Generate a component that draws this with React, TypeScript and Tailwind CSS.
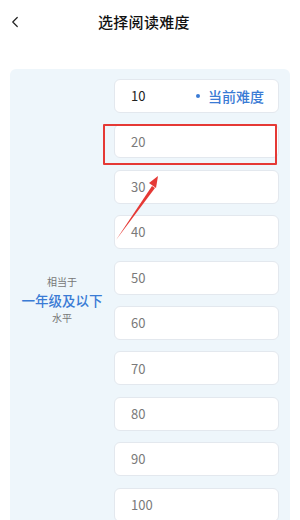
import { ChevronLeft } from "lucide-react";

const levels = [10, 20, 30, 40, 50, 60, 70, 80, 90, 100];

export default function App() {
  return (
    <div
      className="relative w-[300px] h-[520px] overflow-hidden bg-white"
      style={{ fontFamily: '"Noto Sans CJK SC", "Noto Sans", sans-serif' }}
    >
      {/* header */}
      <div className="flex items-center h-[44px] pl-[6px]">
        <ChevronLeft size={18} strokeWidth={1.6} className="text-[#222]" />
        <h1 className="ml-[74px] text-[15px] font-medium text-[#111] tracking-[0.3px]">选择阅读难度</h1>
      </div>

      {/* panel */}
      <div className="mt-[25px] mx-[10px] rounded-[6px] bg-[#eef6fb] flex pt-[10px] pr-[11px] pb-[12px]">
        <div className="w-[104px] flex flex-col items-center justify-center">
          <span className="text-[10px] leading-[16px] text-[#777]">相当于</span>
          <span className="text-[13.5px] leading-[20px] font-medium text-[#3a7bd5]">一年级及以下</span>
          <span className="text-[10px] leading-[16px] text-[#777]">水平</span>
        </div>
        <div className="flex-1 flex flex-col gap-[11.4px]">
          {levels.map((lv, i) => (
            <div
              key={lv}
              className="h-[34px] rounded-[6px] bg-white border border-[#e3e8ee] flex items-center pl-[16px] pr-[14px]"
            >
              <span className={`text-[13px] ${i === 0 ? "text-[#222]" : "text-[#7a7a7a]"}`}>{lv}</span>
              {i === 0 && (
                <span className="ml-auto flex items-center text-[14px] font-medium text-[#3a7bd5]">
                  <span className="w-[4px] h-[4px] rounded-full bg-[#3a7bd5] mr-[8px]" />
                  当前难度
                </span>
              )}
            </div>
          ))}
        </div>
      </div>

      {/* annotation: highlight box */}
      <div className="absolute left-[103px] top-[124px] w-[174px] h-[41px] border-2 border-[#e53935] rounded-[1px]" />

      {/* annotation: arrow */}
      <svg className="absolute left-0 top-0" width="300" height="520" viewBox="0 0 300 520">
        <polygon points="116,240 152,186 155,188" fill="#e53935" />
        <polygon points="158,176 149,183 156,188" fill="#e53935" />
      </svg>
    </div>
  );
}
